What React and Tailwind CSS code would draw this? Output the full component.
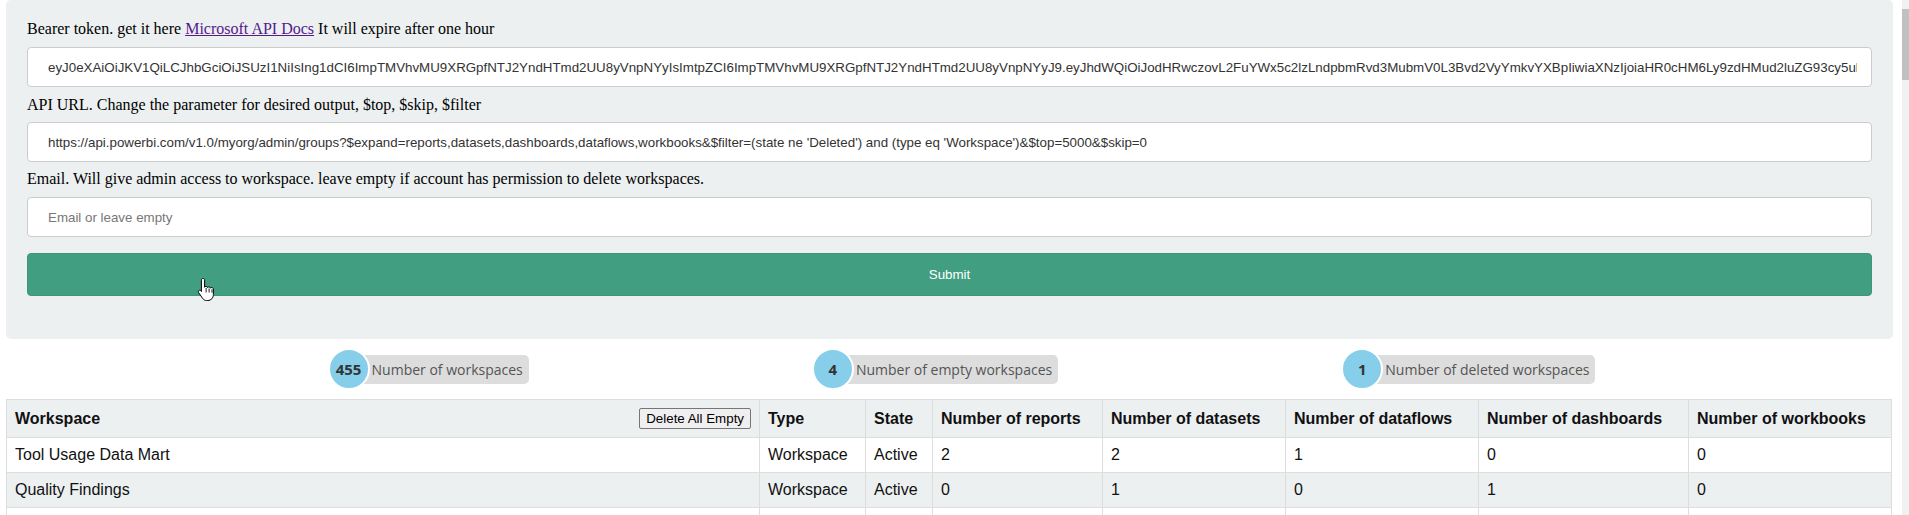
const SANS = { fontFamily: '"Liberation Sans", Arial, sans-serif' }

const token =
  'eyJ0eXAiOiJKV1QiLCJhbGciOiJSUzI1NiIsIng1dCI6ImpTMVhvMU9XRGpfNTJ2YndHTmd2UU8yVnpNYyIsImtpZCI6ImpTMVhvMU9XRGpfNTJ2YndHTmd2UU8yVnpNYyJ9.eyJhdWQiOiJodHRwczovL2FuYWx5c2lzLndpbmRvd3MubmV0L3Bvd2VyYmkvYXBpIiwiaXNzIjoiaHR0cHM6Ly9zdHMud2luZG93cy5ubmV0LzcyZjk4OGJmLTg2ZjEtNDFhZi05MWFiLTJkN2NkMDExZGI0Ny8iLCJpYXQiOjE3MDAwMDAwMDB9'
const apiUrl =
  "https://api.powerbi.com/v1.0/myorg/admin/groups?$expand=reports,datasets,dashboards,dataflows,workbooks&$filter=(state ne 'Deleted') and (type eq 'Workspace')&$top=5000&$skip=0"

const columns = [
  { label: 'Type', w: 'w-[106px]' },
  { label: 'State', w: 'w-[67px]' },
  { label: 'Number of reports', w: 'w-[170px]' },
  { label: 'Number of datasets', w: 'w-[183px]' },
  { label: 'Number of dataflows', w: 'w-[193px]' },
  { label: 'Number of dashboards', w: 'w-[210px]' },
  { label: 'Number of workbooks', w: 'w-[203px]' },
]

const rows = [
  ['Tool Usage Data Mart', 'Workspace', 'Active', 2, 2, 1, 0, 0],
  ['Quality Findings', 'Workspace', 'Active', 0, 1, 0, 1, 0],
  ['Supplier Scorecards', 'Workspace', 'Active', 3, 3, 0, 1, 0],
]

function Badge({ count, label }) {
  return (
    <div className="flex shrink-0 items-center" style={{ fontFamily: '"Open Sans", "DejaVu Sans", sans-serif' }}>
      <div className="relative z-10 flex h-[42px] w-[42px] shrink-0 items-center justify-center rounded-full border-2 border-white bg-[#87ceeb] text-[15px] font-bold text-[#333]">
        {count}
      </div>
      <div className="-ml-[6px] flex h-[29px] items-center whitespace-nowrap rounded-r-[5px] bg-[#dddddd] pl-[8px] pr-[6px] text-[14px] text-[#555]">
        {label}
      </div>
    </div>
  )
}

function Field({ value, placeholder }) {
  return (
    <input
      readOnly
      defaultValue={value}
      placeholder={placeholder}
      style={SANS}
      className="block h-[40px] w-full rounded-[4px] border border-[#cccccc] bg-white pl-[20px] pr-[14px] text-[13.333px] text-[#333] outline-none placeholder:text-[#777]"
    />
  )
}

export default function App() {
  return (
    <div className="relative flex min-h-[515px] bg-white text-black">
      <div className="w-[1902px] pl-[6px]">
        <div
          className="w-[1887px] rounded-[5px] bg-[#ecf0f1] px-[21px] pt-[17px] pb-[43px] text-[16px] leading-[24px]"
          style={{ fontFamily: '"Liberation Serif", "Times New Roman", serif' }}
        >
          <div>
            Bearer token. get it here{' '}
            <a href="#" className="text-[#551a8b] underline">Microsoft API Docs</a>{' '}
            It will expire after one hour
          </div>
          <div className="mt-[6px]"><Field value={token} /></div>
          <div className="mt-[6px]">API URL. Change the parameter for desired output, $top, $skip, $filter</div>
          <div className="mt-[5px]"><Field value={apiUrl} /></div>
          <div className="mt-[5px]">Email. Will give admin access to workspace. leave empty if account has permission to delete workspaces.</div>
          <div className="mt-[6px]"><Field placeholder="Email or leave empty" /></div>
          <button
            style={SANS}
            className="mt-[16px] block h-[43px] w-full rounded-[4px] border border-[#3d9679] bg-[#419e81] text-[13.333px] text-white"
          >
            Submit
          </button>
        </div>

        <div className="mt-[9px] ml-[180px] flex w-[1551px] justify-around">
          <Badge count="455" label="Number of workspaces" />
          <Badge count="4" label="Number of empty workspaces" />
          <Badge count="1" label="Number of deleted workspaces" />
        </div>

        <table className="mt-[9px] w-[1886px] table-fixed border-collapse text-[16px] text-[#111]" style={SANS}>
          <colgroup>
            <col />
            {columns.map((c) => (
              <col key={c.label} className={c.w} />
            ))}
          </colgroup>
          <thead>
            <tr className="h-[38px] bg-[#ecf0f1]">
              <th className="border border-[#dddddd] px-[8px] text-left font-bold">
                <div className="flex items-center justify-between">
                  <span>Workspace</span>
                  <button className="h-[21px] rounded-[2px] border border-[#767676] bg-[#efefef] px-[6px] text-[13.333px] font-normal leading-none text-black">
                    Delete All Empty
                  </button>
                </div>
              </th>
              {columns.map((c) => (
                <th key={c.label} className="border border-[#dddddd] px-[8px] text-left font-bold whitespace-nowrap">
                  {c.label}
                </th>
              ))}
            </tr>
          </thead>
          <tbody>
            {rows.map((r, i) => (
              <tr key={r[0]} className={i % 2 === 1 ? 'h-[35px] bg-[#ecf0f1]' : 'h-[35px] bg-white'}>
                {r.map((v, j) => (
                  <td key={j} className="border border-[#dddddd] px-[8px]">{v}</td>
                ))}
              </tr>
            ))}
          </tbody>
        </table>
      </div>

      <div className="w-[7px] bg-[#f1f1f1] pt-[9px]">
        <div className="h-[71px] w-full bg-[#c1c1c1]" />
      </div>

      <svg className="absolute left-[197px] top-[277px]" width="20" height="26" viewBox="0 0 20 26">
        <path
          d="M6 1.5c1 0 1.6.7 1.6 1.6v7.2c.3-.6.9-.9 1.5-.9.8 0 1.4.5 1.5 1.2.3-.5.8-.8 1.4-.8.8 0 1.4.6 1.5 1.3.3-.4.8-.6 1.3-.6.9 0 1.6.7 1.6 1.6v5.4c0 3.3-2.300 6-5.6 6H9.6c-1.7 0-3-.8-4-2.1L1.6 15.6c-.5-.8-.3-1.7.4-2.1.7-.4 1.5-.2 2 .4l.4.6V3.1C4.4 2.2 5 1.5 6 1.5z"
          fill="white"
          stroke="black"
          strokeWidth="1"
        />
        <path d="M9.1 11v4.5M12.1 11.5v4M15 12.2v3.5" stroke="black" strokeWidth="0.9" />
      </svg>
    </div>
  )
}
